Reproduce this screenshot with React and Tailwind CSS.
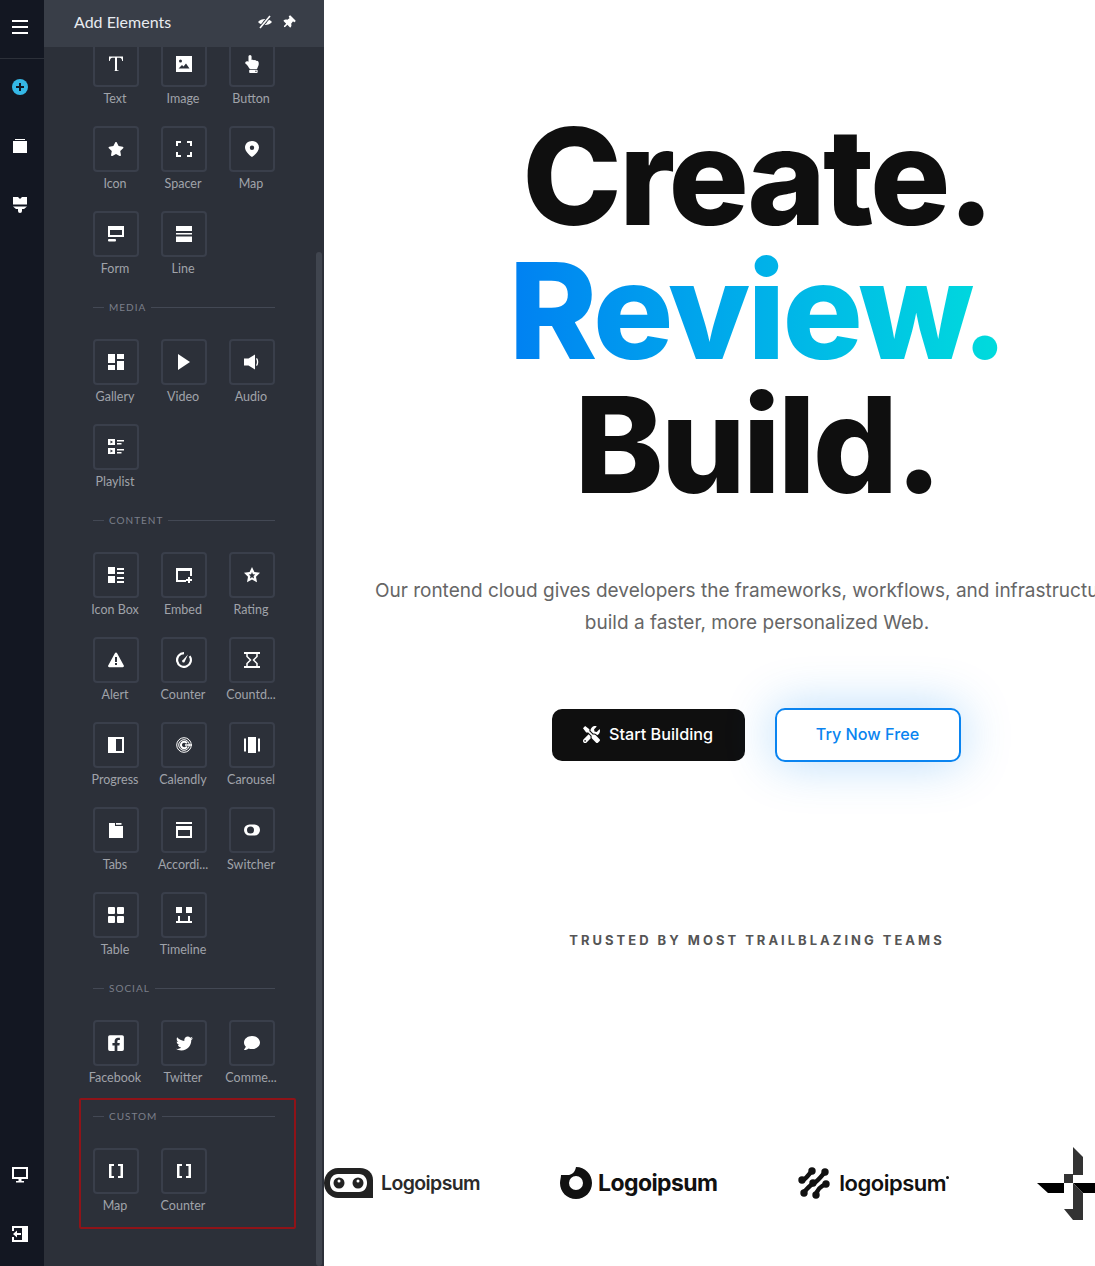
import {
  FaComment, FaFacebookSquare, FaHandPointUp, FaStar,
  FaThumbtack, FaTools, FaTwitter,
} from "react-icons/fa";

const I = ({ children }) => (
  <svg viewBox="0 0 16 16" width="16" height="16" fill="white">{children}</svg>
);

const icons = {
  text: (
    <I>
      <path d="M1 .5h14v4.500h-.8c-.2-1.800-.8-3.200-2.700-3.200H9v11.700c0 .7.500 1 1.700 1v.5H5.300V15c1.200 0 1.700-.3 1.700-1V1.800H4.500C2.600 1.800 2 3.200 1.800 5H1z" />
    </I>
  ),
  image: (
    <I>
      <path fillRule="evenodd" d="M0 0h16v16H0zM2.500 12.500h11l-3.500-5-2.500 3-1.500-1.500zM4.500 3.500a1.500 1.500 0 100 3 1.500 1.500 0 000-3z" />
    </I>
  ),
  button: <FaHandPointUp size={18} color="white" />,
  star: <FaStar size={16} color="white" />,
  spacer: (
    <I>
      <path d="M0 0h5v2H2v3H0zM11 0h5v5h-2V2h-3zM0 11h2v3h3v2H0zM14 11h2v5h-5v-2h3z" />
    </I>
  ),
  map: (
    <I>
      <path fillRule="evenodd" d="M8 0c3.900 0 7 2.800 7 6.500 0 3.500-4 7.500-7 9.500-3-2-7-6-7-9.500C1 2.800 4.100 0 8 0zm0 4.500a2.200 2.200 0 100 4.400 2.200 2.200 0 000-4.400z" />
    </I>
  ),
  form: (
    <I>
      <path fillRule="evenodd" d="M0 0h16v11H0zM2 4v5h12V4z" />
      <rect x="0" y="13" width="8" height="2.500" rx="1" />
    </I>
  ),
  line: (
    <I>
      <path d="M0 0h16v5H0zM0 7h16v1.500H0zM0 10.500h16V16H0z" />
    </I>
  ),
  gallery: (
    <I>
      <path d="M0 0h7v9H0zM9 0h7v5H9zM9 7h7v9H9zM0 11h7v5H0z" />
    </I>
  ),
  video: (
    <I>
      <path d="M2 0l12 8-12 8z" />
    </I>
  ),
  audio: (
    <I>
      <path d="M0 4.500h4.500L11 .5v15l-6.500-4H0z" />
      <path d="M13 4c1.700 2 1.700 6 0 8l-1-.7c1.200-1.700 1.200-4.900 0-6.600z" />
    </I>
  ),
  playlist: (
    <I>
      <path fillRule="evenodd" d="M0 0h7v6H0zM2.500 1.500v3L5 3zM0 9h7v6H0zM2.500 10.500v3L5 12z" />
      <path d="M9 1h7v1.500H9zM9 4h4.500v1.500H9zM9 10h7v1.500H9zM9 13h4.500v1.500H9z" />
    </I>
  ),
  iconbox: (
    <I>
      <path d="M0 0h7v7H0zM0 9h7v7H0zM9 1h7v2H9zM9 5h7v2H9zM9 10h7v2H9zM9 14h7v2H9z" />
    </I>
  ),
  embed: (
    <I>
      <path d="M0 1h16v8h-2V4H2v9h8v2H0z" />
      <path d="M12 10h2v2h2v2h-2v2h-2v-2h-2v-2h2z" />
    </I>
  ),
  rating: (
    <I>
      <path fillRule="evenodd" d="M8 0l2.400 5 5.600.8-4 3.900 1 5.600L8 12.600l-5 2.700 1-5.600-4-3.900L5.600 5zM8 5l-.9 2.200-2.400.3 1.800 1.600-.5 2.400L8 10.300l2 1.200-.5-2.400 1.800-1.600-2.400-.3z" />
    </I>
  ),
  alert: (
    <I>
      <path fillRule="evenodd" d="M8 .5c.5 0 .9.300 1.100.700l6.700 12.300c.4.800-.1 1.800-1.100 1.800H1.300c-1 0-1.500-1-1.100-1.800L6.900 1.200C7.100.8 7.500.5 8 .5zM7 5v5h2V5zM7 11v2h2v-2z" />
    </I>
  ),
  counter: (
    <I>
      <path d="M8 0v2.200a5.800 5.800 0 104.800 2.500l1.700-1.300A8 8 0 118 0z" />
      <path d="M12 2.500L8.900 9.200a1.400 1.400 0 11-1.700-1.500z" />
    </I>
  ),
  countdown: (
    <svg viewBox="0 0 16 16" width="16" height="16" fill="none" stroke="white" strokeWidth="1.500">
      <path d="M0 1h16M0 15h16" strokeWidth="2" />
      <path d="M3 1v3.500L6.500 8 3 11.500V15M13 1v3.500L9.500 8l3.500 3.500V15" />
    </svg>
  ),
  progress: (
    <I>
      <path fillRule="evenodd" d="M0 0h16v16H0zM8 2v12h6V2z" />
    </I>
  ),
  calendly: (
    <svg viewBox="0 0 16 16" width="16" height="16" fill="none" stroke="white">
      <circle cx="8" cy="8" r="7.300" strokeWidth="1" />
      <circle cx="8" cy="8" r="5.300" strokeWidth="1" />
      <path d="M11 6.200A3.300 3.300 0 108 11.300c1.300 0 2.400-.7 3-1.800" strokeWidth="2" />
      <path d="M9 8h7" strokeWidth="1.500" />
    </svg>
  ),
  carousel: (
    <I>
      <path d="M0 1.500h2v13H0zM4 0h8v16H4zM14 1.500h2v13h-2z" />
    </I>
  ),
  tabs: (
    <I>
      <path d="M1 1h6v3h8v12H1zM8 1h5.500v1.800H8z" />
    </I>
  ),
  accordion: (
    <I>
      <path fillRule="evenodd" d="M0 0h16v2H0zM0 4h16v12H0zM2 8v6h12V8z" />
    </I>
  ),
  switcher: (
    <I>
      <path fillRule="evenodd" d="M5.500 2.500h5a5.500 5.500 0 010 11h-5a5.500 5.500 0 010-11zM6.500 4.500a3.500 3.500 0 100 7 3.500 3.500 0 000-7z" />
    </I>
  ),
  table: (
    <I>
      <rect x="0" y="0" width="7" height="7" rx="1" />
      <rect x="9" y="0" width="7" height="7" rx="1" />
      <rect x="0" y="9" width="7" height="7" rx="1" />
      <rect x="9" y="9" width="7" height="7" rx="1" />
    </I>
  ),
  timeline: (
    <I>
      <path d="M0 0h6v6H0zM10 0h6v6h-6zM2 9h2v5H2zM12 9h2v5h-2zM0 14h16v2H0z" />
    </I>
  ),
  facebook: <FaFacebookSquare size={18} color="white" />,
  twitter: <FaTwitter size={17} color="white" />,
  comment: <FaComment size={16} color="white" />,
  bracket: (
    <I>
      <path d="M1 1h5v2H3.500v10H6v2H1zM10 1h5v14h-5v-2h2.500V3H10z" />
    </I>
  ),
};

const basic = [
  ["Text", "text"], ["Image", "image"], ["Button", "button"],
  ["Icon", "star"], ["Spacer", "spacer"], ["Map", "map"],
  ["Form", "form"], ["Line", "line"],
];
const media = [["Gallery", "gallery"], ["Video", "video"], ["Audio", "audio"], ["Playlist", "playlist"]];
const content = [
  ["Icon Box", "iconbox"], ["Embed", "embed"], ["Rating", "rating"],
  ["Alert", "alert"], ["Counter", "counter"], ["Countd...", "countdown"],
  ["Progress", "progress"], ["Calendly", "calendly"], ["Carousel", "carousel"],
  ["Tabs", "tabs"], ["Accordi...", "accordion"], ["Switcher", "switcher"],
  ["Table", "table"], ["Timeline", "timeline"],
];
const social = [["Facebook", "facebook"], ["Twitter", "twitter"], ["Comme...", "comment"]];
const custom = [["Map", "bracket"], ["Counter", "bracket"]];

function Tiles({ items }) {
  return (
    <div className="grid grid-cols-[68px_68px_68px] auto-rows-[85px]">
      {items.map(([label, icon], i) => (
        <div key={i} className="flex flex-col items-center">
          <div className="w-[46px] h-[46px] shrink-0 flex items-center justify-center border-2 border-[#3a3f4b] rounded-[4px]">
            {icons[icon]}
          </div>
          <div className="mt-[4px] pr-[2px] w-full text-center text-[12.5px] leading-4 text-[#a0a3aa] whitespace-nowrap">
            {label}
          </div>
        </div>
      ))}
    </div>
  );
}

function SectionTitle({ children }) {
  return (
    <div className="ml-[11px] w-[182px] h-[22px] mb-[21px] flex items-center">
      <div className="w-[11px] h-px bg-[#434854]" />
      <div className="mx-[5px] text-[10px] tracking-[1px] uppercase text-[#7b7f8a]">{children}</div>
      <div className="flex-1 h-px bg-[#434854]" />
    </div>
  );
}

function Rail() {
  return (
    <div className="w-[44px] shrink-0 h-full bg-[#131722] flex flex-col items-center">
      <div className="w-full h-[59px] shrink-0 flex items-center justify-center border-b border-[#2c3039] pb-[4px] pr-[4px]">
        <div className="w-4 flex flex-col gap-[4px]">
          <div className="h-[2px] bg-white" />
          <div className="h-[2px] bg-white" />
          <div className="h-[2px] bg-white" />
        </div>
      </div>
      <div className="flex-1 w-full pr-[4px] flex flex-col items-center">
        <svg className="mt-[20px]" width="16" height="16" viewBox="0 0 16 16">
          <circle cx="8" cy="8" r="8" fill="#35b8e6" />
          <path d="M7 4h2v3h3v2H9v3H7V9H4V7h3z" fill="#131722" />
        </svg>
        <svg className="mt-[43px]" width="16" height="16" viewBox="0 0 16 16" fill="white">
          <path d="M3 1h10v1H3zM1 3h14v12H1z" />
        </svg>
        <svg className="mt-[43px]" width="16" height="16" viewBox="0 0 16 16" fill="white">
          <path d="M1 0h5l2 2 2-2h5v7.500H1zM1 9.500h14l-3 2.500h-2v2a2 2 0 01-4 0v-2H4z" />
        </svg>
        <svg className="mt-auto" width="16" height="16" viewBox="0 0 16 16" fill="white">
          <path fillRule="evenodd" d="M0 0h16v12H0zM2 2v8h12V2zM6.500 12h3v2h2.500v1.500H4V14h2.500z" />
        </svg>
        <svg className="mt-[43px] mb-[24px]" width="16" height="16" viewBox="0 0 16 16" fill="white">
          <path d="M0 0h16v16H0v-5h2v3h8V2H2v3H0z" />
          <path d="M1 8l4-3.500V7h4v2H5v2.500z" />
        </svg>
      </div>
    </div>
  );
}

function Panel() {
  return (
    <div className="relative w-[280px] shrink-0 h-full bg-[#2c3039] overflow-hidden font-['Lato',sans-serif]">
      <div className="absolute top-0 left-0 right-0 h-[47px] bg-[#393e48] flex items-center pl-[30px] z-10">
        <span className="text-[16px] text-[#e8ebf0] mb-[3px]">Add Elements</span>
        <svg className="ml-[87px] mb-[3px]" width="14" height="14" viewBox="0 0 14 14">
          <path d="M0 7C3 3 11 3 14 7 11 11 3 11 0 7z" fill="white" />
          <circle cx="7" cy="7" r="1.800" fill="#393e48" />
          <path d="M2 13L12 1" stroke="#393e48" strokeWidth="3.500" />
          <path d="M2 13L12 1" stroke="white" strokeWidth="1.600" />
        </svg>
        <FaThumbtack className="ml-[10px] mb-[3px] rotate-45" size={13} color="white" />
      </div>
      <div className="absolute top-[252px] bottom-0 left-[272px] w-[6px] rounded-[3px] bg-[#40454f]" />
      <div className="pt-[41px] pl-[38px]">
        <Tiles items={basic} />
        <SectionTitle>Media</SectionTitle>
        <Tiles items={media} />
        <SectionTitle>Content</SectionTitle>
        <Tiles items={content} />
        <SectionTitle>Social</SectionTitle>
        <Tiles items={social} />
        <div className="-ml-[3px] -mt-[7px] w-[217px] h-[131px] border-2 border-[#8f1318] rounded-[2px] pl-px pt-[5px]">
          <SectionTitle>Custom</SectionTitle>
          <Tiles items={custom} />
        </div>
      </div>
    </div>
  );
}

function Logos() {
  return (
    <div className="mt-[196px] h-[74px] flex items-center font-['Inter',sans-serif] text-[#111]">
      <svg width="50" height="30" viewBox="0 0 50 30" className="shrink-0">
        <path d="M14 0h22c8 0 13 5 13 12v18H14C6 30 0 23 0 15S6 0 14 0z" fill="#222" />
        <path d="M14 6h21c5 0 8 4 8 9s-3 9-8 9H14c-5 0-8-4-8-9s3-9 8-9z" fill="white" />
        <circle cx="15" cy="15" r="5.500" fill="#222" />
        <circle cx="34" cy="15" r="5.500" fill="#222" />
        <circle cx="15" cy="13" r="1.500" fill="white" />
        <circle cx="34" cy="13" r="1.500" fill="white" />
      </svg>
      <span className="ml-[7px] mt-[1px] text-[19.500px] font-semibold tracking-[-0.6px] text-[#2a2a2a]">Logoipsum</span>
      <svg width="32" height="32" viewBox="0 0 32 32" className="ml-[80px] shrink-0">
        <path fillRule="evenodd" d="M16 0c9 0 16 7 16 16s-7 16-16 16S0 25 0 16c0-3 1-5 1-8h7c3 0 7-2 8-8zm0 9a7 7 0 100 14 7 7 0 000-14z" fill="#111" />
      </svg>
      <span className="ml-[6px] text-[23px] font-bold tracking-[-0.6px]">Logoipsum</span>
      <svg width="32" height="32" viewBox="0 0 32 32" className="ml-[81px] shrink-0" fill="#111">
        <g fill="none" stroke="#111" strokeWidth="4.500" strokeLinecap="round">
          <path d="M4 13C8 13 9 9 14 4" />
          <path d="M6 25C10 21 12 18 16 16 20 14 22 11 27 5" />
          <path d="M18 28C19 23 23 19 28 17" />
        </g>
        <circle cx="14" cy="4" r="3.700" />
        <circle cx="27" cy="5" r="3.700" />
        <circle cx="4" cy="13" r="3.700" />
        <circle cx="15" cy="16" r="3.700" />
        <circle cx="28" cy="17" r="3.700" />
        <circle cx="6" cy="26" r="3.700" />
        <circle cx="18" cy="28" r="3.700" />
      </svg>
      <span className="ml-[9px] text-[22px] font-semibold tracking-[-0.5px]">logoipsum</span>
      <div className="w-[3px] h-[3px] rounded-full bg-[#111] self-center mb-[12px]" />
      <svg width="74" height="74" viewBox="0 0 74 74" className="ml-[88px] mt-[2px] shrink-0">
        <path d="M36 0l10 10v18H36z" fill="#333" />
        <path d="M27 27h9v9h-9z" fill="#333" />
        <path d="M0 36h27v10H11zM36 36h38v10H46z" fill="#000" />
        <path d="M36 36l10 10v27H36L27 62h9z" fill="#333" />
      </svg>
    </div>
  );
}

function Main() {
  return (
    <div className="flex-1 h-full bg-white overflow-hidden font-['Inter',sans-serif]">
      <div className="w-[866px] pt-[109px] flex flex-col items-center">
        <h1 className="text-[134px] leading-[134px] font-extrabold text-[#0f0f0f] tracking-[-3px] text-center">
          Create.
          <br />
          <span className="bg-gradient-to-r from-[#0080f2] to-[#00dcdc] bg-clip-text text-transparent">Review.</span>
          <br />
          Build.
        </h1>
        <p className="mt-[64px] text-[19px] leading-8 text-[#666] text-center whitespace-nowrap">
          Our rontend cloud gives developers the frameworks, workflows, and infrastructure to
          <br />
          build a faster, more personalized Web.
        </p>
        <div className="mt-[69px] mr-[2px] flex items-center gap-[30px]">
          <button className="w-[193px] h-[52px] rounded-[10px] bg-[#0f0f0f] text-white text-[16.200px] font-medium flex items-center justify-center gap-[9px] pb-[2px]">
            <FaTools size={17} />
            Start Building
          </button>
          <button className="w-[186px] h-[54px] rounded-[10px] bg-white border-2 border-[#0a84f0] text-[#0a84f0] text-[16.200px] font-medium pb-[2px] shadow-[0_0_50px_rgba(10,132,240,0.3)]">
            Try Now Free
          </button>
        </div>
        <div className="mt-[168px] text-[13px] leading-5 font-bold tracking-[3px] text-[#555]">
          TRUSTED BY MOST TRAILBLAZING TEAMS
        </div>
        <div className="self-start">
          <Logos />
        </div>
      </div>
    </div>
  );
}

export default function App() {
  return (
    <div className="flex w-full h-[1266px] overflow-hidden">
      <Rail />
      <Panel />
      <Main />
    </div>
  );
}
